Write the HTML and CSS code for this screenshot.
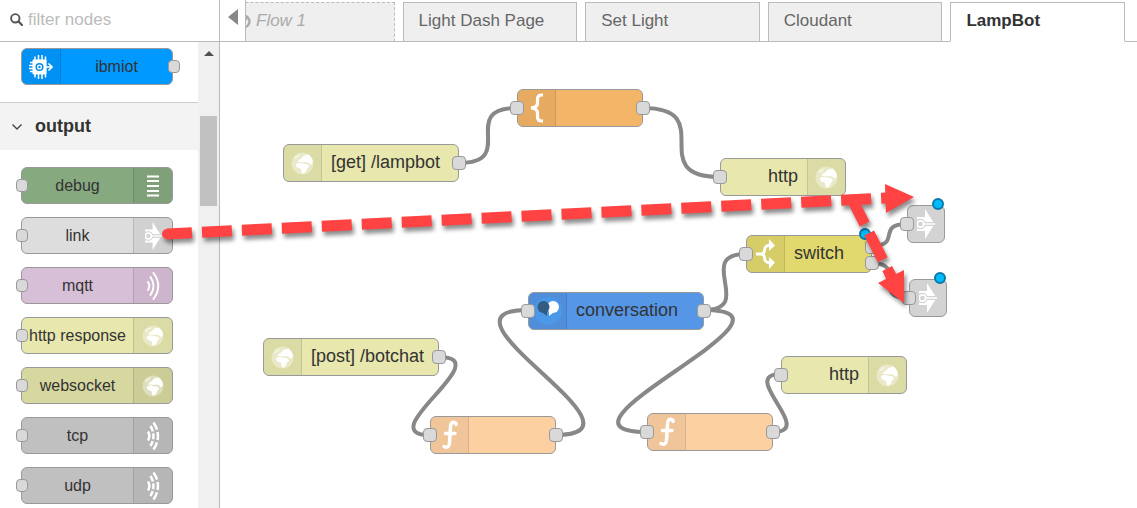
FILE: index.html
```html
<!DOCTYPE html>
<html lang="en">
<head>
<meta charset="utf-8">
<title>LampBot</title>
<link rel="stylesheet" href="styles.css">
</head>
<body>
<svg class="defs" aria-hidden="true">
  <symbol id="globe" viewBox="0 0 22 22">
    <circle cx="11" cy="11" r="10.500" fill="#fff" opacity=".38"/>
    <path fill="#fff" d="M6 9.500 8 7 9.500 6.500 12 3.500 17 2.500 20 6 21 10 19 12.500 17 10.500 14.500 9.500 12 10 9 9.500z"/>
    <path fill="#fff" d="M4.500 12.500 6 10.800 9 10.300 12 11.200 15.500 11.500 17.500 14 15 16 14.500 18.500 12 20.800 10.300 20 9.500 16 6 15z"/>
    <path fill="#fff" opacity=".5" d="M2.500 6 6 3 9 2.500 7 5 4.500 7z"/>
  </symbol>
  <symbol id="linkout" viewBox="0 0 18 30">
    <path fill="#fff" d="M0 8H8V0L17.500 15 8 30V22H0V19.500H3Q8 19 8.500 15 8 11 3 10.500H0z"/>
    <path d="M4 15H18" stroke="#d3d3d3" stroke-width="4"/>
    <circle cx="3.500" cy="15" r="5.200" fill="#d3d3d3"/>
    <path d="M6 15H18" stroke="#fff" stroke-width="1.500"/>
    <circle cx="3.500" cy="15" r="3.200" fill="#d3d3d3" stroke="#fff" stroke-width="1.800"/>
  </symbol>
  <symbol id="waves" viewBox="0 0 14 30">
    <g fill="none" stroke="#fff" stroke-width="2" stroke-linecap="round"><path d="M2 11q2.800 4 0 8M4.500 6q6 9 0 18M7.500 2q9.500 13 0 26"/></g>
  </symbol>
  <symbol id="brokenwaves" viewBox="0 0 14 30">
    <g fill="none" stroke="#fff" stroke-width="2.500"><path d="M2 10.500q2.800 4.500 0 9"/><path d="M4.500 5q6 10 0 20" stroke-dasharray="6 1.900"/><path d="M7.500 1.500q9 13.500 0 27" stroke-dasharray="8 2.400"/></g>
  </symbol>
  <symbol id="function" viewBox="0 0 20 30">
    <path fill="none" stroke="#fff" stroke-width="3.500" stroke-linecap="round" d="M16 4.500V3.500Q11 0 10.500 7L9.500 23Q9 29 4 26.500M5.500 13.500H15"/>
  </symbol>
</svg>
<div class="app">
  <aside class="palette">
    <label class="search">
      <svg width="13" height="13" viewBox="0 0 13 13"><circle cx="5.300" cy="5.300" r="4.200" fill="none" stroke="#555" stroke-width="1.900"/><path d="M8.500 8.500 12 12" stroke="#555" stroke-width="2.200" stroke-linecap="round"/></svg>
      <input type="text" placeholder="filter nodes" aria-label="filter nodes">
    </label>
    <div class="palette-body">
      <div class="palette-list">
        <div class="group first">
          <div class="pnode ibmiot"><span class="picon"><svg width="24" height="24" viewBox="0 0 24 24"><path fill="none" stroke="#fff" stroke-width="1.500" d="M6 1.500v21M9.500 0v24M13 0v24M16.500 1.500v21M1 7.500h5M0 10.500h5M0 13.500h5M1 16.500h5"/><rect x="3.500" y="4.500" width="14" height="15" rx="1" fill="#fff"/><circle cx="10.500" cy="12" r="3.300" fill="#fff" stroke="#008cea" stroke-width="1.500"/><circle cx="10.500" cy="12" r="1.200" fill="#008cea"/><path d="M17 12h6M19.500 8.500 23 12l-3.500 3.500" fill="none" stroke="#fff" stroke-width="1.700"/></svg></span><span class="plabel">ibmiot</span><i class="port out"></i></div>
        </div>
        <button class="category" type="button"><svg width="12" height="8" viewBox="0 0 12 8"><path d="M1.500 1.500 6 6l4.500-4.500" fill="none" stroke="#444" stroke-width="1.400"/></svg>output</button>
        <div class="group">
          <div class="pnode debug"><i class="port in"></i><span class="plabel">debug</span><span class="picon"><svg width="12" height="22" viewBox="0 0 12 22"><path d="M0 1.500h12M0 6h12M0 11h12M0 16h12M0 20.500h12" stroke="#fff" stroke-width="2"/></svg></span></div>
          <div class="pnode link"><i class="port in"></i><span class="plabel">link</span><span class="picon"><svg width="17" height="28"><use href="#linkout"/></svg></span></div>
          <div class="pnode mqtt"><i class="port in"></i><span class="plabel">mqtt</span><span class="picon"><svg width="14" height="30"><use href="#waves"/></svg></span></div>
          <div class="pnode http"><i class="port in"></i><span class="plabel">http response</span><span class="picon"><svg width="22" height="22"><use href="#globe"/></svg></span></div>
          <div class="pnode websocket"><i class="port in"></i><span class="plabel">websocket</span><span class="picon"><svg width="22" height="22"><use href="#globe"/></svg></span></div>
          <div class="pnode net"><i class="port in"></i><span class="plabel">tcp</span><span class="picon"><svg width="14" height="30"><use href="#brokenwaves"/></svg></span></div>
          <div class="pnode net"><i class="port in"></i><span class="plabel">udp</span><span class="picon"><svg width="14" height="30"><use href="#brokenwaves"/></svg></span></div>
        </div>
      </div>
      <div class="scrollbar"><svg width="10" height="5" viewBox="0 0 10 5"><path d="M0 5 5 0l5 5z" fill="#505050"/></svg><div class="thumb"></div></div>
    </div>
  </aside>
  <main class="workspace">
    <nav class="tabbar">
      <button class="tab disabled" type="button"><svg width="15" height="15" viewBox="0 0 15 15"><circle cx="7.500" cy="7.500" r="6" fill="none" stroke="#aaa" stroke-width="2.400"/><path d="M3.500 11.500l8-8" stroke="#aaa" stroke-width="2.400"/></svg>Flow 1</button>
      <button class="tab" type="button">Light Dash Page</button>
      <button class="tab" type="button">Set Light</button>
      <button class="tab" type="button">Cloudant</button>
      <button class="tab active" type="button">LampBot</button>
      <button class="scroll-left" type="button" aria-label="Scroll tabs left"><svg width="10" height="16" viewBox="0 0 10 16"><path d="M10 0v16L0 8z" fill="#888"/></svg></button>
    </nav>
    <div class="canvas">
      <svg class="wires"><g transform="translate(-220 -42)" fill="none" stroke="#888" stroke-width="4">
        <path d="M459 163C519 163 457 108 517 108"/>
        <path d="M643 108C720 108 643 177 720 177"/>
        <path d="M704 310C756 310 694 254 746 254"/>
        <path d="M871 246C903 246 875 224 907 224"/>
        <path d="M871 263C909 263 870 298 908 298"/>
        <path d="M439 357C500 357 369 435 430 435"/>
        <path d="M555 435C663 435 420 310 528 310"/>
        <path d="M704 310C823 310 528 432 647 432"/>
        <path d="M773 432C817 432 737 374 781 374"/>
      </g></svg>
      <div class="node wide http n-get"><span class="icon"><svg width="23" height="23"><use href="#globe"/></svg></span><span class="label">[get] /lampbot</span><i class="port out"></i></div>
      <div class="node template n-template"><i class="port in"></i><span class="icon"><svg width="16" height="30" viewBox="0 0 16 30"><path d="M14 2H12.500Q8.500 2 8.500 6v4Q8.500 14.500 2 15 8.500 15.500 8.500 20v4q0 4 4 4H14" fill="none" stroke="#fff" stroke-width="3.200"/></svg></span><i class="port out"></i></div>
      <div class="node http right n-http1"><i class="port in"></i><span class="label">http</span><span class="icon"><svg width="23" height="23"><use href="#globe"/></svg></span></div>
      <div class="node switch n-switch"><i class="port in"></i><span class="icon"><svg width="20" height="30" viewBox="0 0 20 30"><path d="M0 15h6M15 6Q8.500 6 8.500 11 8.500 15 5 15M15 24Q8.500 24 8.500 19 8.500 15 5 15" fill="none" stroke="#fff" stroke-width="2.800"/><path d="M13 0l6 6.500-6 5.500zM13 30l6-6.500-6-5.500z" fill="#fff"/></svg></span><span class="label">switch</span><i class="port out upper"></i><i class="port out lower"></i><i class="changed"></i></div>
      <div class="node wide conversation n-conv"><i class="port in"></i><span class="icon"><svg width="30" height="30" viewBox="0 0 30 30"><circle cx="15" cy="15" r="14" fill="#4b97e8"/><circle cx="20" cy="11" r="6" fill="#fff"/><path d="M16 14v6l5-4z" fill="#fff"/><circle cx="10.500" cy="11" r="6" fill="#325c80"/><path d="M14 14v6l-5-4z" fill="#325c80"/></svg></span><span class="label">conversation</span><i class="port out"></i></div>
      <div class="node wide http n-post"><span class="icon"><svg width="23" height="23"><use href="#globe"/></svg></span><span class="label">[post] /botchat</span><i class="port out"></i></div>
      <div class="node function n-func1"><i class="port in"></i><span class="icon"><svg width="20" height="30"><use href="#function"/></svg></span><i class="port out"></i></div>
      <div class="node function n-func2"><i class="port in"></i><span class="icon"><svg width="20" height="30"><use href="#function"/></svg></span><i class="port out"></i></div>
      <div class="node http right n-http2"><i class="port in"></i><span class="label">http</span><span class="icon"><svg width="23" height="23"><use href="#globe"/></svg></span></div>
      <div class="node small n-link1"><i class="port in"></i><svg width="18" height="30"><use href="#linkout"/></svg><i class="changed"></i></div>
      <div class="node small n-link2"><i class="port in"></i><svg width="18" height="30"><use href="#linkout"/></svg><i class="changed"></i></div>
    </div>
  </main>
  <svg class="arrows" aria-hidden="true">
    <g fill="#ff4242" stroke="none">
      <circle cx="167" cy="234" r="5"/>
      <path d="M167 234 886 198" stroke="#ff4242" stroke-width="11" stroke-dasharray="30 10" stroke-dashoffset="5"/>
      <path d="M885 184 914 197 886 213z"/>
      <path d="M852 199 892 278" stroke="#ff4242" stroke-width="11" stroke-dasharray="30 10" stroke-dashoffset="2"/>
      <path d="M878 283 904 270V303z"/>
    </g>
  </svg>
</div>
</body>
</html>
```
FILE: styles.css
```css
* { box-sizing: border-box; }
body { margin: 0; font-family: "Liberation Sans", Arial, sans-serif; color: #333; background: #fff; }
button, input { font: inherit; color: inherit; border: 0; margin: 0; padding: 0; background: none; }
svg { display: block; flex: none; }
.defs { position: absolute; width: 0; height: 0; }
.app { position: relative; display: flex; height: 100vh; overflow: hidden; }

.palette { flex: none; width: 220px; display: flex; flex-direction: column; border-right: 1px solid #bbb; }
.search { flex: none; display: flex; align-items: center; gap: 5px; height: 42px; padding: 0 10px 2px; border-bottom: 1px solid #bbb; }
.search input { width: 100%; min-width: 0; height: 30px; font-size: 17px; outline: 0; }
.search input::placeholder { color: #bbb; opacity: 1; }
.palette-body { flex: 1; min-height: 0; display: flex; }
.palette-list { flex: 1; overflow: hidden; }
.group { display: flex; flex-direction: column; gap: 13px; padding: 17px 25px 17px 21px; }
.group.first { padding-top: 6px; }
.category { display: flex; align-items: center; gap: 12px; width: 100%; height: 48px; padding: 0 11px; background: #f3f3f3; border-top: 1px solid #ccc; font-size: 18px; font-weight: bold; }
.scrollbar { flex: none; width: 21px; padding: 9px 2px 0; background: #f0f0f0; }
.scrollbar svg { margin: 0 auto; }
.thumb { height: 90px; margin-top: 60px; background: #c1c1c1; }

.pnode { position: relative; display: flex; height: 37px; border: 1px solid #999; border-radius: 6px; font-size: 16px; }
.picon { flex: none; width: 39px; display: flex; align-items: center; justify-content: center; background: rgba(0,0,0,.05); border-left: 1px solid rgba(0,0,0,.12); border-radius: 0 5px 5px 0; }
.ibmiot .picon { border-left: 0; border-right: 1px solid rgba(0,0,0,.12); border-radius: 5px 0 0 5px; }
.plabel { flex: 1; display: flex; align-items: center; justify-content: center; white-space: nowrap; }
.ibmiot { background: #0099ff; }
.debug { background: #87a980; }
.link { background: #ddd; }
.mqtt { background: #d8bfd8; }
.http { background: #e7e7ae; }
.websocket { background: #d7d7a0; }
.net { background: #c0c0c0; }

.port { position: absolute; top: 50%; width: 14px; height: 14px; margin-top: -7px; background: #d9d9d9; border: 1px solid #999; border-radius: 4px; }
.port.in { left: -8px; }
.port.out { right: -8px; }
.pnode .port { width: 12px; height: 13px; }
.pnode .port.in { left: -6px; }
.pnode .port.out { right: -8px; }

.workspace { flex: 1; min-width: 0; display: flex; flex-direction: column; }
.tabbar { position: relative; flex: none; display: flex; gap: 8px; height: 42px; padding: 2px 12px 0 0; box-shadow: inset 0 -1px #bbb; }
.tab { flex: 1; min-width: 0; display: flex; align-items: center; gap: 5px; padding: 0 15px 2px; border: 1px solid #bbb; background: #efefef; color: #666; font-size: 17px; white-space: nowrap; }
.tab.active { border-bottom-color: #fff; background: #fff; color: #333; font-weight: bold; }
.tab.disabled { border-style: dashed; border-bottom-style: solid; color: #aaa; font-style: italic; }
.scroll-left { position: absolute; left: 0; top: 0; width: 26px; height: 41px; padding: 0 0 7px 8px; background: #fff; border-right: 1px solid #bbb; }

.canvas { position: relative; flex: 1; overflow: hidden; }
.wires, .arrows { position: absolute; left: 0; top: 0; width: 100%; height: 100%; }
.arrows { pointer-events: none; filter: drop-shadow(2px 4px 2px rgba(0,0,0,.45)); }
.node { position: absolute; display: flex; width: 126px; height: 38px; border: 1px solid #999; border-radius: 6px; font-size: 18px; }
.node.wide { width: 176px; }
.node.small { width: 38px; align-items: center; padding-left: 9px; background: #d3d3d3; }
.node.right { justify-content: flex-end; }
.icon { flex: none; width: 38px; display: flex; align-items: center; justify-content: center; background: rgba(0,0,0,.05); border-right: 1px solid rgba(0,0,0,.1); border-radius: 5px 0 0 5px; }
.right .icon { border-right: 0; border-left: 1px solid rgba(0,0,0,.1); border-radius: 0 5px 5px 0; }
.label { display: flex; align-items: center; padding: 0 9px 2px; white-space: nowrap; }
.template { background: #f3b567; }
.function { background: #fdd0a2; }
.switch { background: #e2d96e; }
.conversation { background: #5596e6; }
.port.upper { top: 11px; }
.port.lower { top: 27px; }
.changed { position: absolute; top: -8px; right: 0; width: 12px; height: 12px; border: 2px solid #0b78a8; border-radius: 50%; background: #00bcff; }

.n-get { left: 63px; top: 102px; }
.n-template { left: 297px; top: 47px; }
.n-http1 { left: 500px; top: 116px; }
.n-switch { left: 526px; top: 193px; }
.n-conv { left: 308px; top: 250px; }
.n-post { left: 43px; top: 296px; }
.n-func1 { left: 210px; top: 374px; }
.n-func2 { left: 427px; top: 371px; }
.n-http2 { left: 561px; top: 314px; }
.n-link1 { left: 687px; top: 163px; }
.n-link2 { left: 689px; top: 237px; }
```
